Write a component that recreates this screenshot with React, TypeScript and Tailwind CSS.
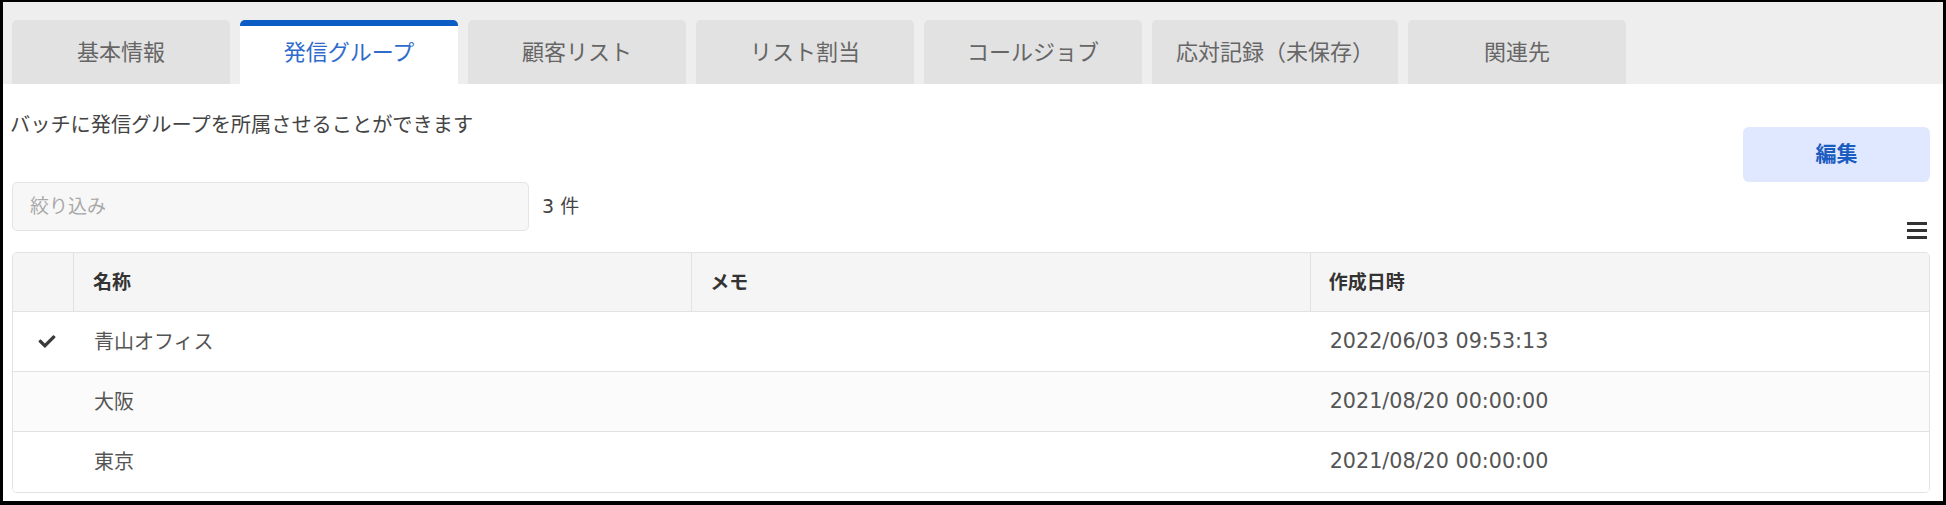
import React from "react";
import { FaCheck } from "react-icons/fa";

const FONT = { fontFamily: '"DejaVu Sans", "Noto Sans CJK JP", sans-serif' };

const tabs = [
  { label: "基本情報", w: "w-[218px]" },
  { label: "発信グループ", w: "w-[218px]", active: true },
  { label: "顧客リスト", w: "w-[218px]" },
  { label: "リスト割当", w: "w-[218px]" },
  { label: "コールジョブ", w: "w-[218px]" },
  { label: "応対記録（未保存）", w: "w-[246px]" },
  { label: "関連先", w: "w-[218px]" },
];

const rows = [
  { checked: true, name: "青山オフィス", memo: "", date: "2022/06/03 09:53:13" },
  { checked: false, name: "大阪", memo: "", date: "2021/08/20 00:00:00" },
  { checked: false, name: "東京", memo: "", date: "2021/08/20 00:00:00" },
];

export default function App() {
  return (
    <div
      style={FONT}
      className="w-[1946px] h-[505px] bg-white border-black border-t-2 border-x-[3px] border-b-[4px] flex flex-col overflow-hidden"
    >
      {/* Tab header */}
      <div className="bg-[#eeeeee] h-[82px] flex items-end gap-[10px] pl-[9px]">
        {tabs.map((t) =>
          t.active ? (
            <div
              key={t.label}
              className={`${t.w} h-[64px] bg-white rounded-t-[5px] border-t-[6px] border-[#0b5cc5] flex items-center justify-center text-[22px] leading-[28px] text-[#2f6bcb] pb-[4px]`}
            >
              {t.label}
            </div>
          ) : (
            <div
              key={t.label}
              className={`${t.w} h-[64px] bg-[#e2e2e2] rounded-t-[5px] flex items-center justify-center text-[22px] leading-[28px] text-[#666666] pt-[2px]`}
            >
              {t.label}
            </div>
          )
        )}
      </div>

      {/* Content */}
      <div className="flex flex-col pl-[9px] pr-[13px]">
        <div className="flex justify-between items-start">
          <div className="mt-[28px] text-[20.2px] leading-[26px] text-[#444444] -ml-[2px]">
            バッチに発信グループを所属させることができます
          </div>
          <button className="mt-[43px] w-[187px] h-[55px] bg-[#dfe8ff] rounded-[6px] flex items-center justify-center text-[21px] font-bold text-[#1b5cc0]">
            編集
          </button>
        </div>

        <div className="flex justify-between h-[58px]">
          <div className="flex items-center self-start h-[49px] gap-[13px]">
            <div className="w-[517px] h-[49px] bg-[#f7f7f7] border border-[#e4e4e4] rounded-[5px] flex items-center px-[17px] text-[19px] text-[#a9a9a9]">
              絞り込み
            </div>
            <div className="text-[19px] text-[#444444]">3 件</div>
          </div>
          <div className="self-end mb-[1px] mr-[3px]">
            <svg width="20" height="17" viewBox="0 0 20 17">
              <rect x="0" y="0" width="20" height="3" fill="#333333" />
              <rect x="0" y="7" width="20" height="3" fill="#333333" />
              <rect x="0" y="14" width="20" height="3" fill="#333333" />
            </svg>
          </div>
        </div>

        {/* Table */}
        <div className="mt-[12px] border border-[#e2e2e2] rounded-[5px] overflow-hidden">
          <div className="grid grid-cols-[61px_1fr_1fr_1fr] h-[59px] bg-[#f5f5f5] border-b border-[#e2e2e2] text-[19px] font-bold text-[#333333]">
            <div className="border-r border-[#e2e2e2]" />
            <div className="border-r border-[#e2e2e2] flex items-center pl-[19px]">名称</div>
            <div className="border-r border-[#e2e2e2] flex items-center pl-[18px]">メモ</div>
            <div className="flex items-center pl-[18px]">作成日時</div>
          </div>
          {rows.map((r, i) => (
            <div
              key={r.name}
              className={`grid grid-cols-[61px_1fr_1fr_1fr] h-[60px] text-[20px] text-[#555555] ${
                i % 2 === 1 ? "bg-[#fbfbfb]" : "bg-white"
              } ${i < rows.length - 1 ? "border-b border-[#e2e2e2]" : ""}`}
            >
              <div className="flex items-center pl-[24px]">
                {r.checked && <FaCheck className="text-[#3a3a3a] w-[20px] h-[17px]" />}
              </div>
              <div className="flex items-center pl-[20px]">{r.name}</div>
              <div className="flex items-center pl-[19px]">{r.memo}</div>
              <div className="flex items-center pl-[19px] text-[20.7px]">{r.date}</div>
            </div>
          ))}
        </div>
      </div>
    </div>
  );
}
